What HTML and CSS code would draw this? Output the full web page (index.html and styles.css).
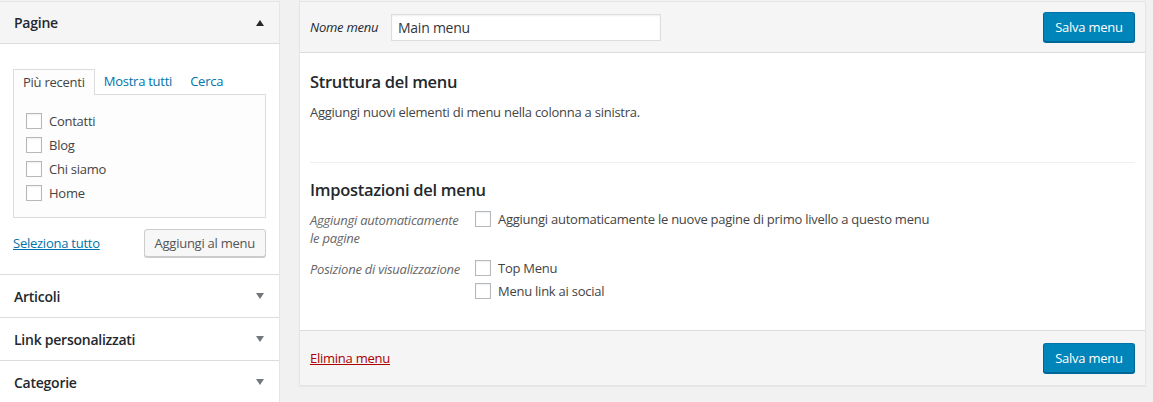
FILE: index.html
```html
<!DOCTYPE html>
<html lang="it">
<head>
<meta charset="utf-8">
<link rel="stylesheet" href="styles.css">
</head>
<body>
<div class="page">
  <aside class="side">
    <section class="acc open">
      <div class="acc-head"><span>Pagine</span><span class="arrow up"></span></div>
      <div class="acc-body">
        <div class="tabs">
          <span class="tab active">Più recenti</span>
          <span class="tab link">Mostra tutti</span>
          <span class="tab link">Cerca</span>
        </div>
        <div class="tab-panel">
          <label class="item"><span class="cb"></span>Contatti</label>
          <label class="item"><span class="cb"></span>Blog</label>
          <label class="item"><span class="cb"></span>Chi siamo</label>
          <label class="item"><span class="cb"></span>Home</label>
        </div>
        <div class="acc-actions">
          <a class="select-all">Seleziona tutto</a>
          <span class="btn">Aggiungi al menu</span>
        </div>
      </div>
    </section>
    <section class="acc"><div class="acc-head"><span>Articoli</span><span class="arrow down"></span></div></section>
    <section class="acc"><div class="acc-head"><span>Link personalizzati</span><span class="arrow down"></span></div></section>
    <section class="acc"><div class="acc-head"><span>Categorie</span><span class="arrow down"></span></div></section>
  </aside>

  <main class="menu">
    <div class="menu-head">
      <span class="name-label">Nome menu</span>
      <span class="name-input">Main menu</span>
      <span class="btn primary">Salva menu</span>
    </div>
    <div class="menu-body">
      <h3 class="title">Struttura del menu</h3>
      <p class="desc">Aggiungi nuovi elementi di menu nella colonna a sinistra.</p>
      <div class="divider"></div>
      <h3 class="title second">Impostazioni del menu</h3>
      <div class="setting">
        <div class="set-label">Aggiungi automaticamente<br>le pagine</div>
        <div class="set-opts">
          <label class="opt"><span class="cb"></span>Aggiungi automaticamente le nuove pagine di primo livello a questo menu</label>
        </div>
      </div>
      <div class="setting">
        <div class="set-label">Posizione di visualizzazione</div>
        <div class="set-opts">
          <label class="opt"><span class="cb"></span>Top Menu</label>
          <label class="opt"><span class="cb"></span>Menu link ai social</label>
        </div>
      </div>
    </div>
    <div class="menu-foot">
      <a class="delete">Elimina menu</a>
      <span class="btn primary">Salva menu</span>
    </div>
  </main>
</div>
</body>
</html>
```
FILE: styles.css
```css
* { box-sizing: border-box; }
html, body { margin: 0; padding: 0; }
body {
  background: #f1f1f1;
  font-family: "Open Sans", "Noto Sans", sans-serif;
  font-size: 13px;
  letter-spacing: -0.25px;
  color: #444;
  width: 1153px;
  height: 402px;
  overflow: hidden;
}
.page {
  display: flex;
  align-items: flex-start;
  padding-top: 1px;
}
.side {
  width: 280px;
  flex: none;
  background: #fff;
  border-top: 1px solid #e5e5e5;
  border-right: 1px solid #e5e5e5;
}
.acc { border-bottom: 1px solid #dcdcde; }
.acc-head {
  height: 42px;
  display: flex;
  align-items: center;
  justify-content: space-between;
  padding: 0 14px 0 14px;
  font-size: 14px;
  font-weight: 600;
  color: #23282d;
  background: #fff;
}
.acc.open .acc-head { background: #f5f5f5; border-bottom: 1px solid #dcdcde; }
.arrow { width: 0; height: 0; margin-right: 1px; }
.arrow.up { border-left: 4px solid transparent; border-right: 4px solid transparent; border-bottom: 6px solid #23282d; }
.arrow.down { border-left: 4px solid transparent; border-right: 4px solid transparent; border-top: 6px solid #72777c; }
.acc-body { padding: 24px 13px 17px 13px; }
.tabs { display: flex; align-items: flex-end; height: 26px; }
.tab { padding: 0 9px; line-height: 25px; }
.tab.active {
  background: #fdfdfd;
  border: 1px solid #dcdcde;
  border-bottom: none;
  height: 26px;
  margin-bottom: -1px;
  position: relative;
  z-index: 1;
  color: #444;
}
.tab.link { color: #0073aa; padding: 0 9px; }
.tab-panel {
  border: 1px solid #dcdcde;
  background: #fdfdfd;
  height: 124px;
  padding: 14px 12px 0 12px;
}
.item { display: flex; align-items: center; height: 24px; color: #444; }
.cb {
  display: inline-block;
  width: 16px;
  height: 16px;
  border: 1px solid #b4b9be;
  background: #fff;
  box-shadow: inset 0 1px 2px rgba(0,0,0,.07);
  margin-right: 7px;
  flex: none;
}
.acc-actions { display: flex; justify-content: space-between; align-items: center; margin-top: 11px; }
.select-all { color: #0073aa; text-decoration: underline; }
.btn {
  display: inline-flex;
  align-items: center;
  justify-content: center;
  height: 28px;
  padding: 0 10px;
  border: 1px solid #ccc;
  border-radius: 3px;
  background: #f7f7f7;
  box-shadow: 0 1px 0 #ccc;
  color: #555;
  white-space: nowrap;
}
.menu {
  margin-left: 19px;
  width: 847px;
  flex: none;
  background: #fff;
  border: 1px solid #e5e5e5;
  box-shadow: 0 1px 1px rgba(0,0,0,.04);
}
.menu-head {
  height: 51px;
  background: #f5f5f5;
  border-bottom: 1px solid #dcdcde;
  display: flex;
  align-items: center;
  padding: 0 10px;
}
.name-label { font-style: italic; color: #23282d; width: 81px; }
.name-input {
  width: 270px;
  height: 27px;
  border: 1px solid #ddd;
  background: #fff;
  box-shadow: inset 0 1px 2px rgba(0,0,0,.07);
  padding: 0 6px;
  display: flex;
  align-items: center;
  color: #32373c;
  font-size: 14px;
}
.btn.primary {
  margin-left: auto;
  width: 92px;
  height: 30px;
  padding: 0;
  background: #0085ba;
  border-color: #0073aa #006799 #006799;
  box-shadow: 0 1px 0 #006799;
  color: #fff;
}
.menu-body { padding: 17px 10px 31px; }
.title { margin: 0; font-size: 16.5px; font-weight: 600; color: #23282d; line-height: 24px; letter-spacing: -0.3px; }
.desc { margin: 9px 0 0; line-height: 18px; }
.divider { border-top: 1px solid #eee; margin-top: 41px; }
.title.second { margin-top: 15px; }
.setting { display: flex; margin-top: 9px; }
.setting + .setting { margin-top: 13px; }
.set-label { width: 165px; font-style: italic; color: #666; line-height: 18px; flex: none; }
.set-opts { display: flex; flex-direction: column; }
.opt { display: flex; align-items: center; height: 16px; line-height: 16px; color: #444; }
.opt + .opt { margin-top: 7px; }
.menu-foot {
  height: 55px;
  background: #f5f5f5;
  border-top: 1px solid #dcdcde;
  display: flex;
  align-items: center;
  padding: 0 10px;
}
.delete { color: #a00; text-decoration: underline; }
```
